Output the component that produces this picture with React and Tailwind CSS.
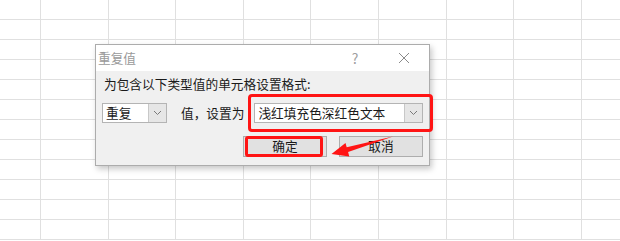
import React from 'react';

const FONT = { fontFamily: '"Noto Sans CJK SC", "Noto Sans", sans-serif' };

// Chevron used by both combo boxes
const ComboButton = () => (
  <div className="flex h-full w-[18px] shrink-0 items-center justify-center border-l border-[#c8c8c8] bg-[#e6e6e6]">
    <svg width="9" height="6" viewBox="0 0 9 6">
      <path d="M1 1 L4.5 4.5 L8 1" fill="none" stroke="#7a7a7a" strokeWidth="1" />
    </svg>
  </div>
);

const Combo = ({ text, className }) => (
  <div className={`flex h-[20px] shrink-0 items-stretch border border-[#b4b4b4] bg-white ${className}`}>
    <span className="flex flex-1 items-center whitespace-nowrap pl-[3px] text-[12.7px] leading-none text-[#1a1a1a]">{text}</span>
    <ComboButton />
  </div>
);

const Sheet = () => {
  const cells = Array.from({ length: 12 * 10 });
  return (
    <div className="grid grid-cols-[41px_repeat(9,67.6px)] grid-rows-[repeat(12,20px)]">
      {cells.map((_, i) => (
        <div key={i} className="border-b border-r border-[#e0e0e0] bg-white" />
      ))}
    </div>
  );
};

export default function App() {
  return (
    <div className="relative h-[241px] w-[620px] overflow-hidden bg-white" style={FONT}>
      <Sheet />

      {/* dialog */}
      <div className="absolute left-[95px] top-[44px] flex h-[122px] w-[335px] flex-col border border-[#acacac] bg-[#f0f0f0] shadow-[2px_3px_6px_rgba(0,0,0,0.22)]">
        <div className="flex h-[26px] items-center bg-white pl-[2px]">
          <span className="text-[12.7px] leading-none text-[#9a9a9a]">重复值</span>
          <span className="ml-auto w-[12px] text-center text-[14px] leading-none text-[#a0a0a0]">?</span>
          <div className="ml-[37px] mr-[19px] flex h-[12px] w-[12px] items-center justify-center">
            <svg width="12" height="12" viewBox="0 0 12 12">
              <path d="M1 1 L11 11 M11 1 L1 11" stroke="#8a8a8a" strokeWidth="1" />
            </svg>
          </div>
        </div>

        <div className="flex flex-col px-[6px]">
          <div className="mt-[5px] whitespace-nowrap pl-[2px] text-[12.7px] leading-[16px] text-[#1a1a1a]">为包含以下类型值的单元格设置格式:</div>

          <div className="mt-[2px] flex h-[38px] items-center">
            <Combo text="重复" className="w-[65px]" />
            <span className="ml-[14px] shrink-0 whitespace-nowrap text-[12.7px] leading-none text-[#1a1a1a]">值，设置为</span>
            <Combo text="浅红填充色深红色文本" className="ml-[10px] w-[169px]" />
          </div>

          <div className="mt-[4px] flex justify-end gap-[12px]">
            <button className="flex h-[21px] w-[84px] items-center justify-center border border-[#adadad] bg-[#e1e1e1] text-[12.7px] leading-none text-[#1a1a1a]">确定</button>
            <button className="flex h-[21px] w-[84px] items-center justify-center border border-[#adadad] bg-[#e1e1e1] text-[12.7px] leading-none text-[#1a1a1a]">取消</button>
          </div>
        </div>
      </div>

      {/* red annotations */}
      <div className="absolute left-[248px] top-[94px] h-[38px] w-[185px] rounded-[4px] border-[3px] border-[#ff1414]" />
      <div className="absolute left-[245px] top-[136px] h-[21px] w-[78px] rounded-[3px] border-[3px] border-[#ff1414]" />
      <svg className="absolute left-0 top-0" width="620" height="241" viewBox="0 0 620 241">
        <polygon
          points="393,136.5 346.7,147.2 345.5,142.9 331.5,154 349.3,156.6 348.1,152"
          fill="#ff1414"
        />
      </svg>
    </div>
  );
}
